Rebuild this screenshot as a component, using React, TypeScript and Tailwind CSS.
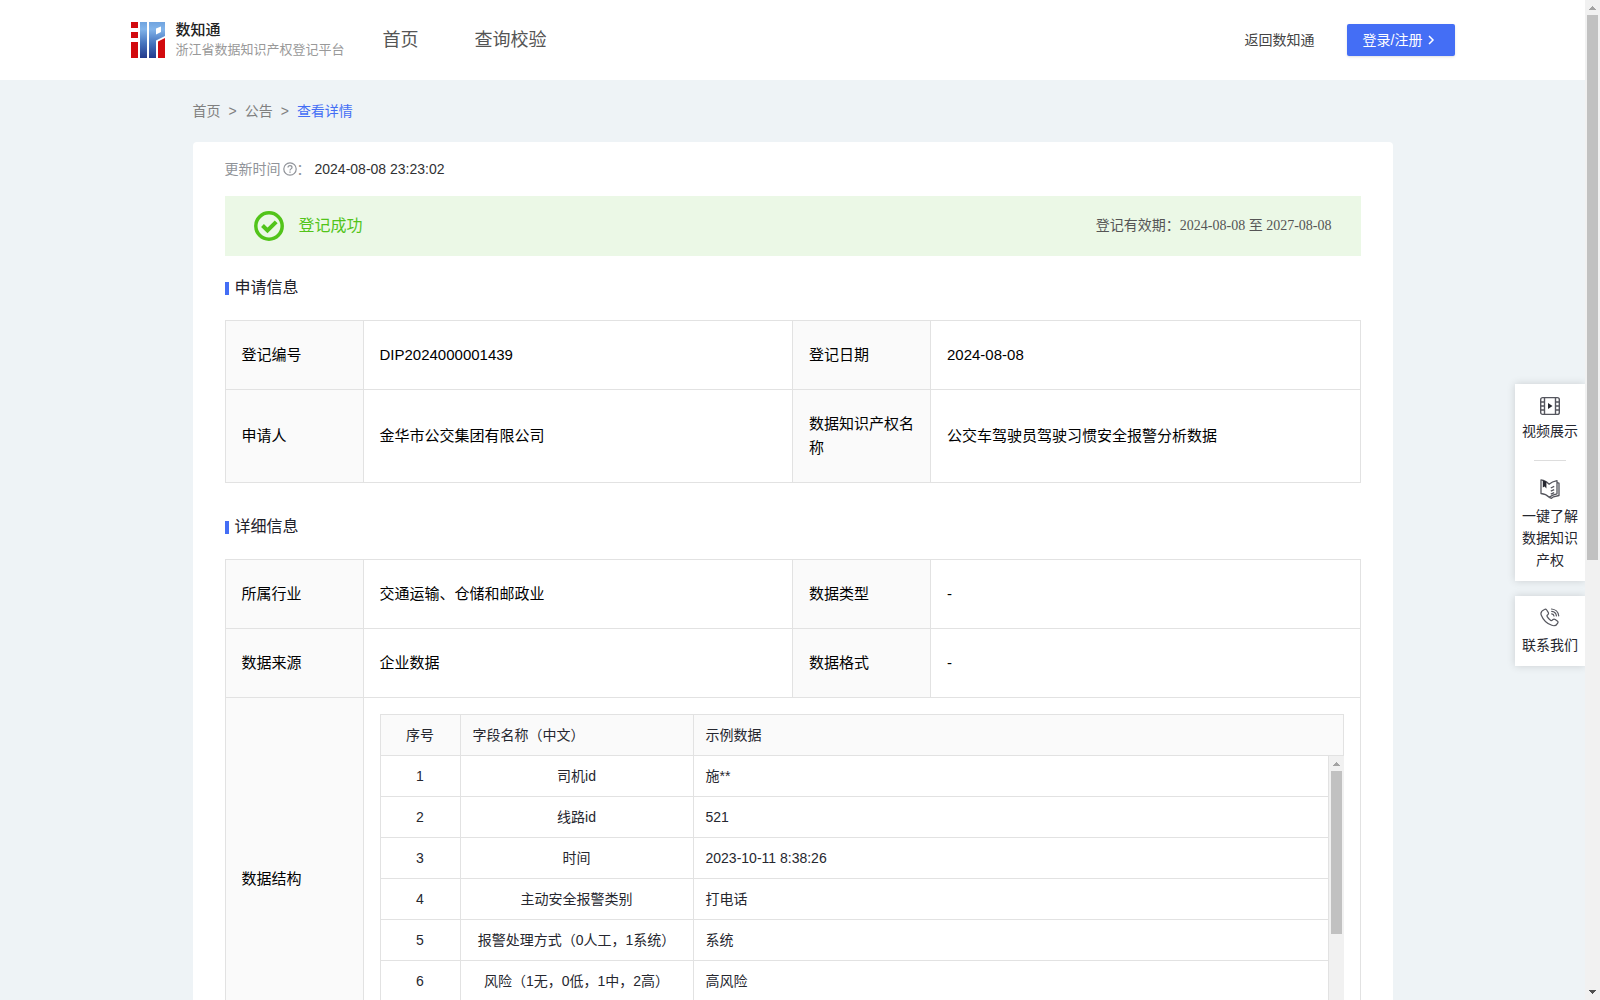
import React from "react";

const navLinks = ["首页", "查询校验"];

const fields = [
  { name: "司机id", sample: "施**" },
  { name: "线路id", sample: "521" },
  { name: "时间", sample: "2023-10-11 8:38:26" },
  { name: "主动安全报警类别", sample: "打电话" },
  { name: "报警处理方式（0人工，1系统）", sample: "系统" },
  { name: "风险（1无，0低，1中，2高）", sample: "高风险" },
];

function Logo() {
  return (
    <svg width="34" height="36" viewBox="0 0 34 36" aria-hidden="true">
      <defs>
        <linearGradient id="logoBlue" x1="0" y1="0" x2="0" y2="36" gradientUnits="userSpaceOnUse">
          <stop offset="0" stopColor="#6fa3df" />
          <stop offset="0.2" stopColor="#82b4ea" />
          <stop offset="0.6" stopColor="#4573bd" />
          <stop offset="1" stopColor="#233a8c" />
        </linearGradient>
      </defs>
      <path d="M0 0h7v6H0zM0 10h7v6H0zM0 20h7v16H0z" fill="#d20a0e" />
      <path d="M9 0h7v36H9z" fill="url(#logoBlue)" />
      <path fillRule="evenodd" d="M18 0h16v14l-9 4.500V36h-7zM25 6.500v6l5-2.500V4.500z" fill="url(#logoBlue)" />
      <path d="M27 19.500l7-3.500v20h-7z" fill="#d20a0e" />
    </svg>
  );
}

function QuestionIcon() {
  return (
    <svg width="14" height="14" viewBox="0 0 14 14" fill="none" stroke="#909399" aria-hidden="true">
      <circle cx="7" cy="7" r="6.200" strokeWidth="1.200" />
      <path d="M5 5.600C5 4.400 5.900 3.700 7 3.700s2 .7 2 1.800c0 1.300-2 1.500-2 2.900" strokeWidth="1.200" />
      <path d="M7 9.500v1.200" strokeWidth="1.300" />
    </svg>
  );
}

function SuccessIcon() {
  return (
    <svg width="30" height="30" viewBox="0 0 30 30" fill="none" stroke="#52c41a" aria-hidden="true">
      <circle cx="15" cy="15" r="13.200" strokeWidth="3.500" />
      <path d="M8.500 14.500l5 5 8.700-8.700" strokeWidth="4" />
    </svg>
  );
}

function VideoIcon() {
  return (
    <svg width="20" height="20" viewBox="0 0 20 20" fill="none" stroke="#55565e" strokeWidth="1.400" aria-hidden="true">
      <rect x="0.700" y="1.600" width="18.600" height="16.800" rx="2" />
      <path d="M4.500 1.600v16.800M15.500 1.600v16.800M.7 6h3.800M.7 10h3.800M.7 14h3.800M15.500 6h3.800M15.500 10h3.800M15.500 14h3.800" />
      <path d="M8 7l4.500 3L8 13z" fill="#26272f" stroke="none" />
    </svg>
  );
}

function BookIcon() {
  return (
    <svg width="20" height="20" viewBox="0 0 20 20" fill="none" stroke="#55565e" strokeWidth="1.300" strokeLinejoin="round" aria-hidden="true">
      <path d="M1 .8c3 .4 5.800 1.800 8 4.400 2-1.700 4.700-2.900 8-3.500v13.100c-3 .5-5.500 1.600-7.800 3.500-2.200-2.300-4.900-3.500-8.200-3.800z" />
      <path d="M17 3.600l2 .6v12.300l-5.500 1.300-2 1.500-2.200-1" />
      <path d="M2.800 1.200l3.600 1.300v7L4.600 7.600 2.800 8.400z" fill="#26272f" stroke="none" />
      <path d="M10.800 9l3.400-1.600M10.800 12.200l3.400-1.600M10.800 15.200l3.400-1.600" />
    </svg>
  );
}

function PhoneIcon() {
  return (
    <svg width="20" height="20" viewBox="0 0 20 20" fill="none" stroke="#55565e" strokeWidth="1.200" strokeLinejoin="round" strokeLinecap="round" aria-hidden="true">
      <path d="M4.500 1.500c.8-.5 1.600-.3 2.200.5l1.500 2.300c.5.800.4 1.600-.2 2.200l-.8.700c-.3.400-.3.900 0 1.400.9 1.600 2 2.800 3.600 3.800.5.300 1 .2 1.400-.2l.8-.7c.7-.6 1.400-.6 2.200-.1l2.100 1.500c.8.600.9 1.400.4 2.200-1.200 2.300-3.300 3.200-5.900 2.200C7.200 15.700 3.100 11.700 1.300 7.200.4 5 1.600 2.700 4.500 1.500z" />
      <path d="M11.500 1c3.800.2 6.800 3 7.200 6.800M11.700 3.400c2.600.2 4.400 2 4.700 4.500M11.700 5.800c1.300.2 2.100 1 2.300 2.200" />
    </svg>
  );
}

function Arrow({ down = false }: { down?: boolean }) {
  return (
    <svg width="7" height="4" viewBox="0 0 7 4" shapeRendering="crispEdges" aria-hidden="true">
      {down ? <path d="M0 0h7L3.500 4z" fill="#505050" /> : <path d="M0 4h7L3.500 0z" fill="#a3a3a3" />}
    </svg>
  );
}

function SectionTitle({ children }: { children: React.ReactNode }) {
  return (
    <h2 className="flex items-center gap-1.5 py-5 text-base leading-6 text-[#1f212b]">
      <span className="h-[13px] w-1 bg-[#446ef5]" />
      {children}
    </h2>
  );
}

function InfoTable({ children }: { children: React.ReactNode }) {
  return (
    <table className="mb-3 w-full table-fixed border-separate border-spacing-0 border-t border-l border-[#e2e2e2] text-[15px] leading-6 text-black">
      <colgroup>
        <col className="w-[138px]" />
        <col />
        <col className="w-[138px]" />
        <col />
      </colgroup>
      <tbody>{children}</tbody>
    </table>
  );
}

function Label({ children }: { children: React.ReactNode }) {
  return (
    <th scope="row" className="border-r border-b border-[#e2e2e2] bg-[#fafafa] px-4 py-[22px] text-left font-normal">
      {children}
    </th>
  );
}

function Value({ children }: { children: React.ReactNode }) {
  return <td className="border-r border-b border-[#e2e2e2] px-4 py-[22px]">{children}</td>;
}

function FieldCols() {
  return (
    <colgroup>
      <col className="w-20" />
      <col className="w-[233px]" />
      <col />
    </colgroup>
  );
}

function FieldTable() {
  const cell = "h-[41px] border-r border-b border-[#e2e2e2] px-3";
  return (
    <div className="border-t border-l border-[#e2e2e2] text-sm text-[#26272f]">
      <table className="w-full table-fixed border-separate border-spacing-0 bg-[#fafafa]">
        <FieldCols />
        <thead>
          <tr>
            <th className={`${cell} text-center font-normal`}>序号</th>
            <th className={`${cell} text-left font-normal`}>字段名称（中文）</th>
            <th className={`${cell} text-left font-normal`}>示例数据</th>
          </tr>
        </thead>
      </table>
      <div className="flex h-[287px] overflow-hidden">
        <div className="min-w-0 flex-1">
          <table className="w-full table-fixed border-separate border-spacing-0">
            <FieldCols />
            <tbody>
              {fields.map((field, idx) => (
                <tr key={field.name}>
                  <td className={`${cell} text-center`}>{idx + 1}</td>
                  <td className={`${cell} text-center`}>{field.name}</td>
                  <td className={cell}>{field.sample}</td>
                </tr>
              ))}
            </tbody>
          </table>
        </div>
        <div className="flex w-[15px] flex-col items-center bg-[#f1f1f1] pt-1.5">
          <Arrow />
          <div className="mt-[5px] h-[163px] w-[11px] bg-[#c1c1c1]" />
        </div>
      </div>
    </div>
  );
}

function Header() {
  return (
    <header className="h-20 bg-white">
      <div className="mx-auto flex h-full max-w-[1324px] items-center">
        <a href="#" className="flex items-center gap-[11px]">
          <Logo />
          <span>
            <span className="block text-[15px] leading-5 font-medium text-[#222]">数知通</span>
            <span className="block text-[13px] leading-5 text-[#999]">浙江省数据知识产权登记平台</span>
          </span>
        </a>
        <nav className="ml-[38px] flex gap-14 text-lg leading-7 text-[#555]">
          {navLinks.map((link) => (
            <a key={link} href="#">
              {link}
            </a>
          ))}
        </nav>
        <a href="#" className="ml-auto text-sm text-[#444]">
          返回数知通
        </a>
        <button type="button" className="ml-8 flex h-8 w-[108px] items-center gap-1 rounded-xs bg-[#446ef5] pl-4 text-sm text-white shadow-sm">
          登录/注册
          <svg width="10" height="10" viewBox="0 0 10 10" fill="none" stroke="currentColor" strokeWidth="1.500" aria-hidden="true">
            <path d="M3 1l4 4-4 4" />
          </svg>
        </button>
      </div>
    </header>
  );
}

function SideBar() {
  const panel = "flex w-[70px] flex-col items-center bg-white px-1.5 text-center text-sm leading-[22px] text-[#26272f] shadow-[0_0_8px_rgba(0,0,0,0.15)]";
  return (
    <aside className="absolute top-96 right-0 flex flex-col gap-[15px]">
      <div className={`${panel} pt-3 pb-2.5`}>
        <a href="#" className="flex flex-col items-center gap-1">
          <VideoIcon />
          <span className="whitespace-nowrap">视频展示</span>
        </a>
        <span className="my-[18px] h-px w-8 bg-[#ddd]" />
        <a href="#" className="flex flex-col items-center gap-1.5">
          <BookIcon />
          <span>
            一键了解
            <br />
            数据知识
            <br />
            产权
          </span>
        </a>
      </div>
      <div className={`${panel} pt-3 pb-2.5`}>
        <a href="#" className="flex flex-col items-center gap-1.5">
          <PhoneIcon />
          <span className="whitespace-nowrap">联系我们</span>
        </a>
      </div>
    </aside>
  );
}

export default function App() {
  return (
    <div className="flex h-screen overflow-hidden font-['Liberation_Sans','Noto_Sans_CJK_SC',sans-serif]" lang="zh-CN">
      <div className="relative min-w-0 flex-1 overflow-hidden bg-[#eef3f6]">
        <Header />

        <main className="mx-auto max-w-[1200px]">
          <nav className="flex gap-2 py-5 text-sm leading-[22px] text-[#808080]">
            <a href="#">首页</a>
            <span>&gt;</span>
            <a href="#">公告</a>
            <span>&gt;</span>
            <a href="#" className="text-[#446ef5]">
              查看详情
            </a>
          </nav>

          <div className="rounded bg-white px-8 pb-8">
            <div className="flex items-center py-4 text-sm leading-[22px] text-[#909399]">
              更新时间
              <span className="ml-0.5">
                <QuestionIcon />
              </span>
              ：<span className="ml-1 text-[#303133]">2024-08-08 23:23:02</span>
            </div>

            <div className="flex h-[60px] items-center bg-[#ebf8e6] px-[29px]">
              <SuccessIcon />
              <span className="ml-[15px] text-base text-[#52c41a]">登记成功</span>
              <span className="ml-auto font-['Liberation_Serif','Noto_Sans_CJK_SC',serif] text-sm text-[#555]">
                登记有效期：2024-08-08 至 2027-08-08
              </span>
            </div>

            <SectionTitle>申请信息</SectionTitle>
            <InfoTable>
              <tr>
                <Label>登记编号</Label>
                <Value>DIP2024000001439</Value>
                <Label>登记日期</Label>
                <Value>2024-08-08</Value>
              </tr>
              <tr>
                <Label>申请人</Label>
                <Value>金华市公交集团有限公司</Value>
                <Label>数据知识产权名称</Label>
                <Value>公交车驾驶员驾驶习惯安全报警分析数据</Value>
              </tr>
            </InfoTable>

            <SectionTitle>详细信息</SectionTitle>
            <InfoTable>
              <tr>
                <Label>所属行业</Label>
                <Value>交通运输、仓储和邮政业</Value>
                <Label>数据类型</Label>
                <Value>-</Value>
              </tr>
              <tr>
                <Label>数据来源</Label>
                <Value>企业数据</Value>
                <Label>数据格式</Label>
                <Value>-</Value>
              </tr>
              <tr>
                <Label>数据结构</Label>
                <td colSpan={3} className="border-r border-b border-[#e2e2e2] p-4">
                  <FieldTable />
                </td>
              </tr>
            </InfoTable>
          </div>
        </main>

        <SideBar />
      </div>

      {/* page scroll bar */}
      <div className="flex w-[15px] flex-col items-center bg-[#f1f1f1] py-1.5">
        <Arrow />
        <div className="mt-[5px] h-[545px] w-[11px] bg-[#c1c1c1]" />
        <div className="mt-auto">
          <Arrow down />
        </div>
      </div>
    </div>
  );
}
